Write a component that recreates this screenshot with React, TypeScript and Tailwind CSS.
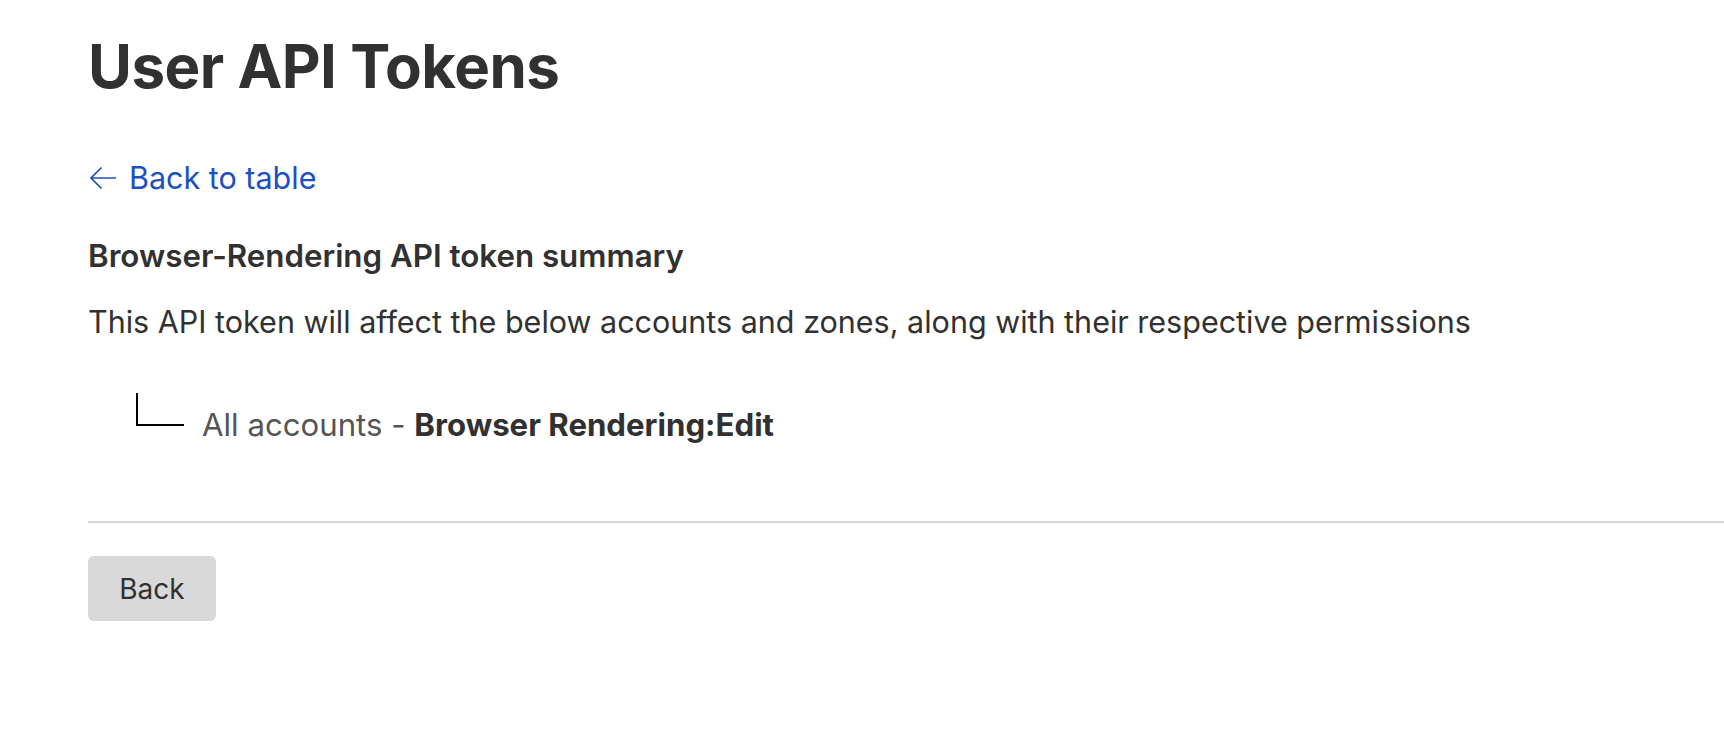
// Token summary page: title, back link, permission tree, footer button.
const font = { fontFamily: 'Inter, "Noto Sans", sans-serif' }

function ArrowLeft() {
  return (
    <svg width="28" height="24" viewBox="0 0 28 24" fill="none" className="shrink-0">
      <path d="M27 12H2.5M12.5 1.5L2 12l10.5 10.5" stroke="currentColor" strokeWidth="1.7" />
    </svg>
  )
}

export default function App() {
  return (
    <div className="min-h-screen bg-white text-[#313131]" style={font}>
      <div className="pl-[88px] pt-[29px]">
        <h1 className="text-[60px] leading-[74px] font-bold tracking-[-0.5px]">User API Tokens</h1>

        <a href="#" className="mt-[57px] flex items-center gap-[12px] text-[30.5px] leading-[36px] text-[#1d4fc4]">
          <span className="ml-[1px] flex"><ArrowLeft /></span>
          Back to table
        </a>
      </div>

      <div className="pl-[88px] pt-[44px]">
        <h2 className="text-[31.3px] leading-[32px] font-semibold">Browser-Rendering API token summary</h2>
        <p className="mt-[33px] text-[30.5px] leading-[34px]">
          This API token will affect the below accounts and zones, along with their respective permissions
        </p>

        <div className="mt-[54px] ml-[48px] flex items-start gap-[18px]">
          <div className="h-[33px] w-[48px] border-l-2 border-b-2 border-black" />
          <div className="mt-[15px] text-[31.2px] leading-[34px]">
            <span className="text-[#555555]">All accounts - </span>
            <span className="font-bold">Browser Rendering:Edit</span>
          </div>
        </div>
      </div>

      <div className="ml-[88px] mt-[79px] h-[2px] bg-[#d6d6d6]" />

      <div className="pl-[88px] pt-[33px]">
        <button type="button" className="h-[65px] w-[128px] rounded-[6px] bg-[#d9d9d9] text-[28px]">
          Back
        </button>
      </div>
    </div>
  )
}
